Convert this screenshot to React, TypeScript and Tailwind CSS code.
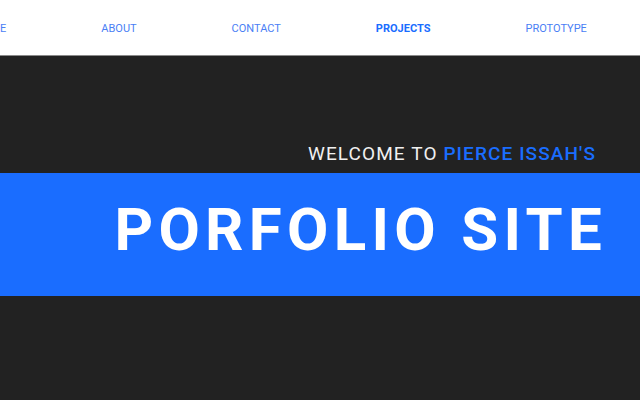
import React from 'react';

const links = ["HOME", "ABOUT", "CONTACT", "PROJECTS", "PROTOTYPE"];

function App() {
    return (
        <div className="w-full h-[400px] overflow-hidden bg-[#222222]" style={{ fontFamily: "Roboto, 'Liberation Sans', sans-serif" }}>
            <nav className="h-[56px] bg-white border-b border-[#8a8a8a] flex items-center overflow-hidden">
                <ul className="flex items-center gap-[95px] -ml-[25px] mt-[4px] whitespace-nowrap">
                    {links.map((l) => (
                        <li key={l} className={l === "PROJECTS" ? "text-[11px] font-bold text-[#1a6dff]" : "text-[11px] text-[#4a80f5]"}>
                            {l}
                        </li>
                    ))}
                </ul>
            </nav>
            <div className="pt-[78px]">
                <p className="text-right pr-[44px] text-[19px] leading-[39px] tracking-[1.1px] text-[#f0f0f0]">
                    WELCOME TO <span className="font-medium text-[#1a6dff]">PIERCE ISSAH'S</span>
                </p>
                <div className="h-[123px] bg-[#1a6dff] flex items-center justify-end pr-[33px] pb-[9px]">
                    <h1 className="text-[60px] font-bold text-white tracking-[5.3px] leading-none">PORFOLIO SITE</h1>
                </div>
            </div>
        </div>
    )
}

export default App;
